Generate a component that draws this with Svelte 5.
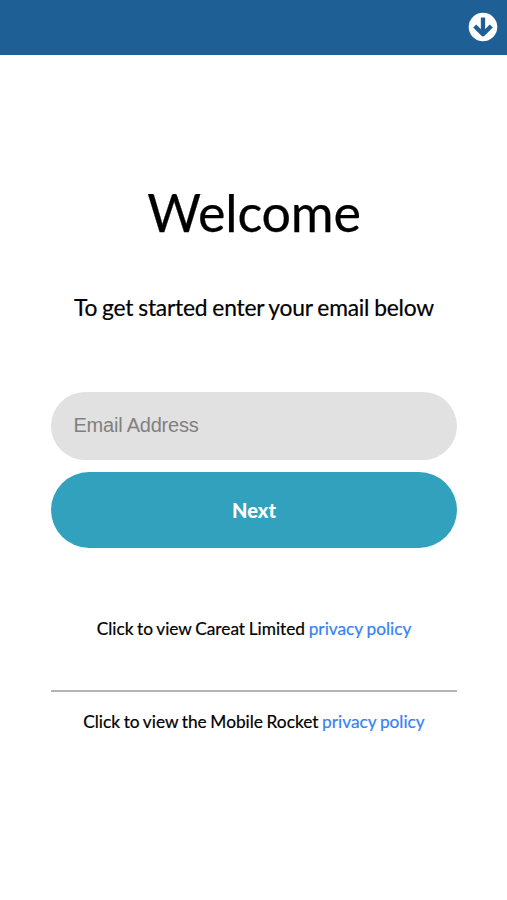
<script>
  let email = $state('');
</script>

<div class="page">
  <header>
    <svg class="down" viewBox="0 0 30 30" aria-label="Download">
      <circle cx="15" cy="15" r="14.3" fill="#fff" />
      <path d="M15 5.4V22.5M6.7 14L15 22.3L23.3 14" fill="none" stroke="#1e5f96" stroke-width="4.3" stroke-linejoin="round" />
    </svg>
  </header>
  <main>
    <h1>Welcome</h1>
    <p class="intro">To get started enter your email below</p>
    <input type="email" placeholder="Email Address" bind:value={email} />
    <button type="button">Next</button>
    <p class="legal">Click to view Careat Limited <a href="#privacy">privacy policy</a></p>
    <hr />
    <p class="legal second">Click to view the Mobile Rocket <a href="#rocket">privacy policy</a></p>
  </main>
</div>

<style>
  .page { min-height: 900px; background: #fff; color: #000; font-family: Lato, sans-serif; overflow: hidden; }
  header { height: 54.5px; background: #1e5f96; display: flex; justify-content: flex-end; align-items: center; padding-right: 9px; box-sizing: border-box; }
  .down { width: 30px; height: 30px; }
  main { display: flex; flex-direction: column; width: 406px; margin: 0 auto 0 51px; text-align: center; }
  h1 { font-size: 52px; font-weight: 400; line-height: 64px; margin: 125.5px 0 0; -webkit-text-stroke: 0.25px; letter-spacing: -0.2px; }
  .intro { font-size: 22.8px; line-height: 28px; margin: 48.5px 0 0; white-space: nowrap; letter-spacing: -0.2px; word-spacing: -0.7px; -webkit-text-stroke: 0.2px; }
  input { height: 68.5px; margin: 71px 0 0; padding: 0 22.5px 1px; border: 0; border-radius: 35px; background: #e1e1e1; font: 20px "Liberation Sans", sans-serif; letter-spacing: -0.22px; box-sizing: border-box; outline: 0; }
  input::placeholder { color: #808080; opacity: 1; }
  button { height: 75.5px; margin: 12px 0 0; padding: 0; border: 0; border-radius: 38px; background: #32a1bd; color: #fff; font: 900 20px Lato, sans-serif; }
  .legal { font-size: 17.3px; line-height: 22px; margin: 70px 0 0; white-space: nowrap; word-spacing: -0.8px; -webkit-text-stroke: 0.2px; }
  .legal a { color: #3482f6; text-decoration: none; }
  hr { width: 100%; height: 2px; border: 0; background: #b4b4b4; margin: 50px 0 0; }
  .second { margin-top: 19px; }
</style>
